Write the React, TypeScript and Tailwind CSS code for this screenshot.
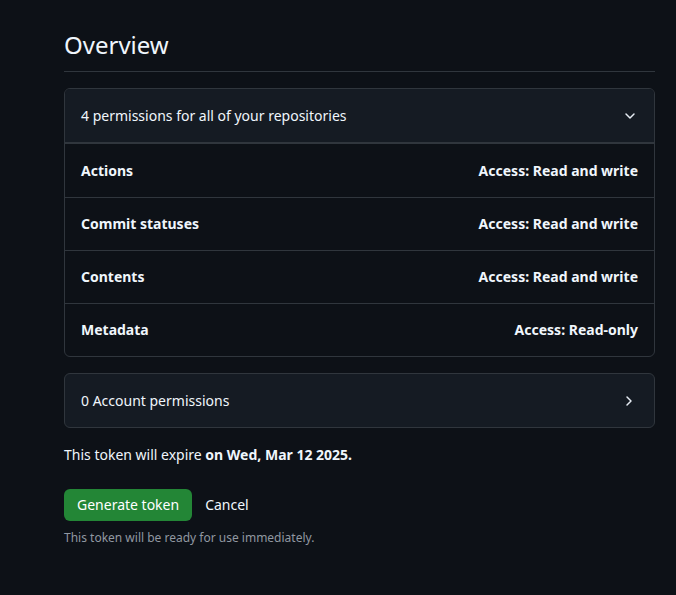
import { ChevronDown, ChevronRight } from 'lucide-react';

type Permission = {
  name: string;
  access: string;
};

const repoPermissions: Permission[] = [
  { name: 'Actions', access: 'Read and write' },
  { name: 'Commit statuses', access: 'Read and write' },
  { name: 'Contents', access: 'Read and write' },
  { name: 'Metadata', access: 'Read-only' },
];

export default function App() {
  return (
    <div
      className="min-h-[595px] w-full bg-[#0d1117] text-[#f0f6fc]"
      style={{ fontFamily: '"Noto Sans", "Liberation Sans", sans-serif' }}
    >
      <div className="ml-16 mr-[21px] pt-[29px]">
        <h2 className="border-b border-[#30363d] pb-[10px] text-[24px] leading-[32px] font-normal">Overview</h2>

        <div className="mt-4 overflow-hidden rounded-md border border-[#30363d]">
          <div className="flex h-[54px] items-center justify-between border-b border-[#30363d] bg-[#151b23] pl-4 pr-[16px]">
            <span className="text-sm">4 permissions for all of your repositories</span>
            <ChevronDown className="h-4 w-4 text-[#e6edf3]" strokeWidth={2.2} />
          </div>
          <div className="border-t border-[#30363d]">
            {repoPermissions.map((p, i) => (
              <div
                key={p.name}
                className={`flex h-[53px] items-center justify-between px-4 text-sm font-bold ${
                  i > 0 ? 'border-t border-[#30363d]' : ''
                }`}
              >
                <span>{p.name}</span>
                <span>Access: {p.access}</span>
              </div>
            ))}
          </div>
        </div>

        <div className="mt-4 flex h-[55px] items-center justify-between rounded-md border border-[#30363d] bg-[#151b23] pl-4 pr-[17px]">
          <span className="text-sm">0 Account permissions</span>
          <ChevronRight className="h-4 w-4 text-[#e6edf3]" strokeWidth={2.2} />
        </div>

        <p className="mt-[16px] text-sm leading-[21px]">
          This token will expire <span className="font-bold">on Wed, Mar 12 2025.</span>
        </p>

        <div className="mt-[24px] flex items-center gap-[1px]">
          <button
            type="button"
            className="h-8 rounded-md bg-[#238636] px-[13px] text-sm font-normal text-white"
          >
            Generate token
          </button>
          <button type="button" className="h-8 px-3 text-sm text-[#f0f6fc]">
            Cancel
          </button>
        </div>

        <p className="mt-[9px] text-xs text-[#9198a1]">This token will be ready for use immediately.</p>
      </div>
    </div>
  );
}
